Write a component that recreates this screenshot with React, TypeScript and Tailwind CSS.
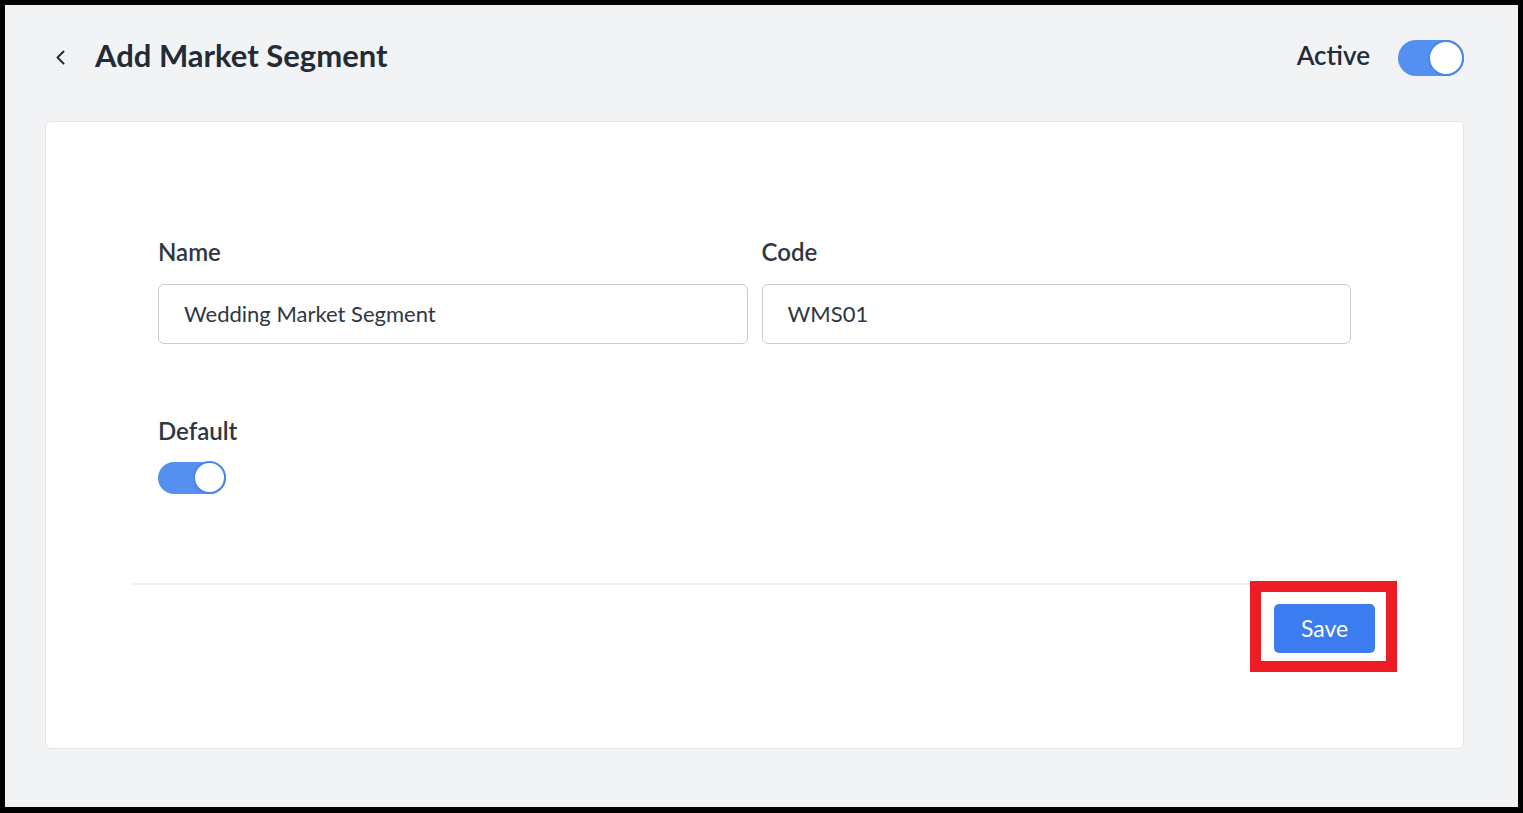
import { useState } from "react";

function Toggle({ on, onChange, size }: { on: boolean; onChange: () => void; size: "lg" | "md" }) {
  const track = size === "lg" ? "h-[36px] w-[66px]" : "h-[32px] w-[68px]";
  const knob = size === "lg" ? "size-[36px]" : "size-[33px]";
  return (
    <button
      type="button"
      onClick={onChange}
      className={`relative flex items-center rounded-full ${track} ${on ? "justify-end bg-[#5590f0]" : "justify-start bg-[#d5d9df]"}`}
    >
      <span className={`${knob} rounded-full border-2 border-[#4a86ec] bg-white`} />
    </button>
  );
}

export default function App() {
  const [active, setActive] = useState(true);
  const [isDefault, setIsDefault] = useState(true);
  const [name, setName] = useState("Wedding Market Segment");
  const [code, setCode] = useState("WMS01");

  return (
    <div className="h-[813px] border-[5px] border-b-[6px] border-black bg-[#f2f3f5] pl-[40px] pr-[54px] font-['Lato',sans-serif]">
      <header className="mt-[31px] flex h-[38px] items-center justify-between pl-[10px]">
        <div className="flex items-center gap-[29px]">
          <button type="button" className="mt-[4px] text-[#222b36]">
            <svg width="11" height="15" viewBox="0 0 11 15" fill="none">
              <path d="M8.5 1.5 L2.5 7.5 L8.5 13.5" stroke="currentColor" strokeWidth="2" strokeLinecap="round" strokeLinejoin="round" />
            </svg>
          </button>
          <h1 className="text-[31px] font-bold leading-none text-[#222b36]">Add Market Segment</h1>
        </div>
        <div className="flex items-center gap-[28px]">
          <span className="text-[26px] font-semibold text-[#222b36]">Active</span>
          <div className="mt-[6px] flex">
            <Toggle on={active} onChange={() => setActive(!active)} size="lg" />
          </div>
        </div>
      </header>

      <section className="mt-[47px] rounded-[6px] border border-[#e2e5e9] bg-white pt-[116px] pb-[95px]">
        <div className="px-[112px]">
          <div className="grid grid-cols-2 gap-[14px]">
            <label className="flex flex-col">
              <span className="mb-[17px] text-[24px] font-semibold leading-[1.2] text-[#2f3742]">Name</span>
              <input
                value={name}
                onChange={(e) => setName(e.target.value)}
                className="h-[60px] rounded-[6px] border-[1.5px] border-[#c9cdd3] px-[25px] text-[22px] text-[#2f3742] outline-none"
              />
            </label>
            <label className="flex flex-col">
              <span className="mb-[17px] text-[24px] font-semibold leading-[1.2] text-[#2f3742]">Code</span>
              <input
                value={code}
                onChange={(e) => setCode(e.target.value)}
                className="h-[60px] rounded-[6px] border-[1.5px] border-[#c9cdd3] px-[25px] text-[22px] text-[#2f3742] outline-none"
              />
            </label>
          </div>

          <div className="mt-[73px] flex flex-col items-start">
            <span className="mb-[16px] text-[24px] font-semibold leading-[1.2] text-[#2f3742]">Default</span>
            <Toggle on={isDefault} onChange={() => setIsDefault(!isDefault)} size="md" />
          </div>
        </div>

        <div className="mx-[87px] mt-[89px] border-t-2 border-[#eef0f2]" />

        <div className="mx-[88px] mt-[19px] flex justify-end">
          <div className="relative">
            <button
              type="button"
              className="h-[49px] w-[101px] rounded-[5px] bg-[#3b7cf0] text-[23px] text-white"
            >
              Save
            </button>
            <div className="pointer-events-none absolute -top-[23px] -right-[22px] -bottom-[19px] -left-[24px] border-[11px] border-[#ee1c25]" />
          </div>
        </div>
      </section>
    </div>
  );
}
